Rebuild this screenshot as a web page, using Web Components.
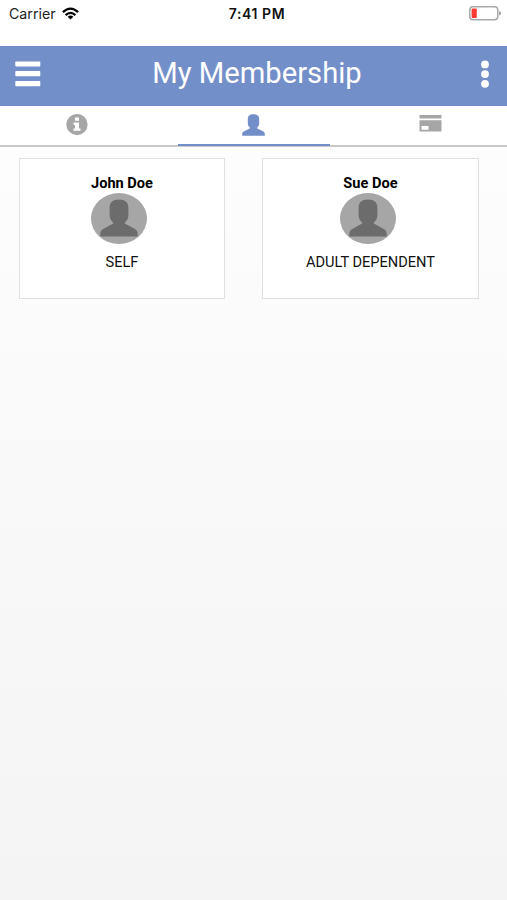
<!DOCTYPE html>
<html lang="en">
<head>
<meta charset="utf-8">
<meta name="viewport" content="width=device-width, initial-scale=1">
<title>My Membership</title>
<style>
  html, body { height: 100%; margin: 0; }
  body { font-family: Roboto, sans-serif; color: #111; background: #fff; }
</style>
</head>
<body>
<membership-app>
  <status-bar slot="status" carrier="Carrier" time="7:41 PM"></status-bar>
  <nav-header slot="header">My Membership</nav-header>
  <tab-bar slot="tabs">
    <tab-item><ui-icon name="info" style="width: 22px; height: 22px"></ui-icon></tab-item>
    <tab-item active><ui-icon name="person" style="width: 23px; height: 22px"></ui-icon></tab-item>
    <tab-item><ui-icon name="card" style="width: 23px; height: 22px"></ui-icon></tab-item>
  </tab-bar>
  <member-card name="John Doe">SELF</member-card>
  <member-card name="Sue Doe">ADULT DEPENDENT</member-card>
</membership-app>

<script>
const ICONS = {
  info: `<svg viewBox="0 0 22 22"><circle cx="11" cy="10.6" r="10.6"/>
    <path fill="#fff" d="M9 3.4h4v3.3H9zM7.6 8.6H13v5.8h1.5v2.3H7.6v-2.3H9v-3.5H7.6z"/></svg>`,
  person: `<svg viewBox="0 0 38 38" preserveAspectRatio="none"><path d="M19 .4c-6.4 0-9.400 2.800-9.400 8.600v7c0 3.200 1.200 5.600 3.600 7.600v1L3.600 29.800C1.200 31.200.3 32.600.3 34.600v2.900h37.400v-2.900c0-2-.9-3.400-3.300-4.800l-9.600-5.200v-1c2.400-2 3.600-4.400 3.600-7.600V9C28.400 3.200 25.400.4 19 .4z"/></svg>`,
  card: `<svg viewBox="0 0 23 22"><path fill-rule="evenodd" d="M.5 1h22v3.500H.5zM.5 6.300h22v11.300H.5zM2.500 12v3.800h7V12z"/></svg>`,
  menu: `<svg viewBox="0 0 26 26"><rect x=".3" y=".4" width="25" height="5.200" rx=".8"/><rect x=".3" y="10.100" width="25" height="5.200" rx=".8"/><rect x=".3" y="20" width="25" height="5.200" rx=".8"/></svg>`,
  more: `<svg viewBox="0 0 8 28"><circle cx="4" cy="4.400" r="3.900"/><circle cx="4" cy="14.100" r="3.900"/><circle cx="4" cy="23.800" r="3.900"/></svg>`,
  wifi: `<svg viewBox="0 0 17 13"><g fill="none" stroke="currentColor" stroke-width="2.300"><path d="M.9 5.200Q8.500-1.900 16.100 5.200"/><path d="M3.600 8.100Q8.500 3.600 13.400 8.100"/></g><path d="M8.500 12.500 5.600 9.700Q8.500 7.300 11.400 9.700z"/></svg>`,
  battery: `<svg viewBox="0 0 32 15"><rect x=".8" y=".8" width="28" height="13" rx="3.200" fill="#fff" stroke="#a9a9ab" stroke-width="1.500"/><rect x="2.600" y="2.600" width="5.200" height="9.400" rx="1" fill="#fb3a30"/><path fill="#99999b" d="M30.200 5q1.700.6 1.700 2.300t-1.700 2.300z"/></svg>`,
};

class UiIcon extends HTMLElement {
  connectedCallback() {
    if (this.shadowRoot) return;
    this.attachShadow({ mode: 'open' }).innerHTML = `
      <style>
        :host { display: block; flex: none; }
        svg { display: block; width: 100%; height: 100%; fill: currentColor; }
      </style>
      ${ICONS[this.getAttribute('name')] ?? ''}
    `;
  }
}

class StatusBar extends HTMLElement {
  connectedCallback() {
    if (this.shadowRoot) return;
    this.attachShadow({ mode: 'open' }).innerHTML = `
      <style>
        :host {
          display: grid;
          grid-template-columns: 1fr auto 1fr;
          align-items: center;
          box-sizing: border-box;
          height: 46px;
          padding: 0 6px 19px 9px;
          font: 14.2px/18px Inter, sans-serif;
          background: #fff;
        }
        .carrier { display: flex; align-items: center; gap: 6px; color: #222; }
        .wifi { width: 17px; height: 13px; color: #000; }
        .time { padding-left: 4px; font-weight: 600; font-size: 14px; letter-spacing: .6px; }
        .battery { width: 32px; height: 15px; justify-self: end; }
      </style>
      <div class="carrier"><span>${this.getAttribute('carrier')}</span><ui-icon class="wifi" name="wifi"></ui-icon></div>
      <span class="time">${this.getAttribute('time')}</span>
      <ui-icon class="battery" name="battery"></ui-icon>
    `;
  }
}

class NavHeader extends HTMLElement {
  connectedCallback() {
    if (this.shadowRoot) return;
    this.attachShadow({ mode: 'open' }).innerHTML = `
      <style>
        :host {
          display: grid;
          grid-template-columns: 26px 1fr 8px;
          align-items: center;
          box-sizing: border-box;
          height: 60px;
          padding: 0 18px 4px 15px;
          color: #fff;
          background: #738fc9;
        }
        h1 {
          margin: 0 0 2px;
          padding-right: 8px;
          text-align: center;
          font-size: 29.2px;
          line-height: 36px;
          font-weight: 400;
        }
        .menu { width: 26px; height: 26px; }
        .more { width: 8px; height: 28px; }
      </style>
      <ui-icon class="menu" name="menu"></ui-icon>
      <h1><slot></slot></h1>
      <ui-icon class="more" name="more"></ui-icon>
    `;
  }
}

class TabBar extends HTMLElement {
  connectedCallback() {
    if (this.shadowRoot) return;
    this.attachShadow({ mode: 'open' }).innerHTML = `
      <style>
        :host {
          display: grid;
          grid-template-columns: repeat(3, 152px);
          justify-content: space-between;
          box-sizing: border-box;
          height: 41px;
          padding: 0 1px;
          background: linear-gradient(#c8c8c8, #c8c8c8) 0 39px / 100% 2px no-repeat #fff;
        }
      </style>
      <slot></slot>
    `;
  }
}

class TabItem extends HTMLElement {
  connectedCallback() {
    if (this.shadowRoot) return;
    this.attachShadow({ mode: 'open' }).innerHTML = `
      <style>
        :host {
          display: flex;
          justify-content: center;
          box-sizing: border-box;
          height: 40px;
          padding-top: 8px;
          color: #a6a6a6;
        }
        :host([active]) { color: #738fc9; border-bottom: 2px solid #738fc9; }
      </style>
      <slot></slot>
    `;
  }
}

class MemberCard extends HTMLElement {
  connectedCallback() {
    if (this.shadowRoot) return;
    this.attachShadow({ mode: 'open' }).innerHTML = `
      <style>
        :host {
          display: flex;
          flex-direction: column;
          align-items: center;
          box-sizing: border-box;
          height: 141px;
          padding-top: 14px;
          border: 1px solid #e0e0e0;
          background: #fff;
          font-size: 14.6px;
          line-height: 20px;
          color: #111;
        }
        .name { font-weight: 700; color: #000; }
        .avatar {
          display: flex;
          justify-content: center;
          box-sizing: border-box;
          width: 56px;
          height: 51px;
          margin: 0 6px 8px 0;
          padding-top: 6px;
          border-radius: 50%;
          background: #a6a6a6;
          color: #6c6c6c;
        }
        .avatar ui-icon { width: 38px; height: 38px; }
      </style>
      <span class="name">${this.getAttribute('name')}</span>
      <div class="avatar"><ui-icon name="person"></ui-icon></div>
      <span><slot></slot></span>
    `;
  }
}

class MembershipApp extends HTMLElement {
  connectedCallback() {
    if (this.shadowRoot) return;
    this.attachShadow({ mode: 'open' }).innerHTML = `
      <style>
        :host { display: flex; flex-direction: column; height: 100%; }
        main {
          flex: 1;
          display: grid;
          grid-template-columns: 206px 217px;
          justify-content: space-between;
          align-items: start;
          padding: 11px 28px 0 19px;
          background: linear-gradient(#fdfdfd, #f4f4f4);
        }
      </style>
      <slot name="status"></slot>
      <slot name="header"></slot>
      <slot name="tabs"></slot>
      <main><slot></slot></main>
    `;
  }
}

customElements.define('ui-icon', UiIcon);
customElements.define('status-bar', StatusBar);
customElements.define('nav-header', NavHeader);
customElements.define('tab-bar', TabBar);
customElements.define('tab-item', TabItem);
customElements.define('member-card', MemberCard);
customElements.define('membership-app', MembershipApp);
</script>
</body>
</html>
